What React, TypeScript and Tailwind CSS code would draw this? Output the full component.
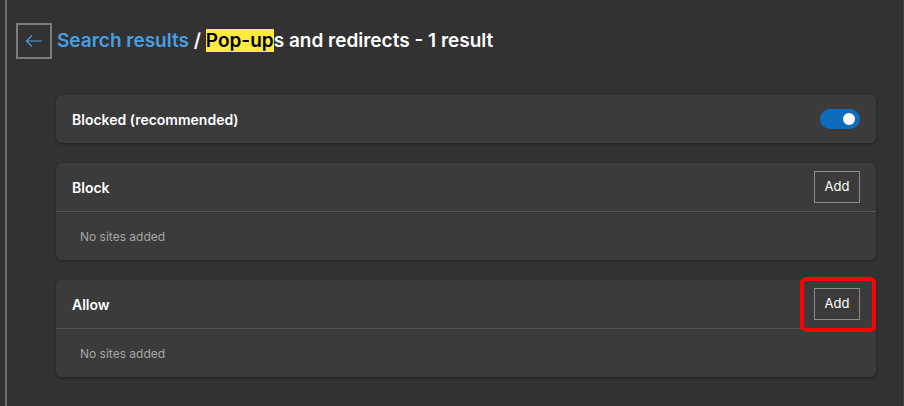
import { ReactNode } from "react";

function Card({ children }: { children: ReactNode }) {
  return (
    <div className="rounded-md bg-[#3b3b3b] shadow-[0_1px_3px_rgba(0,0,0,0.35)]">
      {children}
    </div>
  );
}

function AddButton({ highlight }: { highlight?: boolean }) {
  return (
    <div className="relative">
      <button className="h-[32px] w-[46px] border border-[#8c8c8c] bg-[#3b3b3b] text-[13px] text-white">
        Add
      </button>
      {highlight && (
        <span className="pointer-events-none absolute -left-[14px] -right-[16px] -top-[11px] -bottom-[12px] rounded-md border-4 border-[#ff0000]"></span>
      )}
    </div>
  );
}

function SiteList({ title, highlight }: { title: string; highlight?: boolean }) {
  return (
    <Card>
      <div className="flex h-[49px] items-center justify-between border-b border-[#555555] pl-4 pr-4">
        <span className="text-[14px] font-semibold text-white">{title}</span>
        <AddButton highlight={highlight} />
      </div>
      <div className="flex h-[48px] items-center pl-6 pt-[2px] text-[12px] text-[#a6a6a6]">
        No sites added
      </div>
    </Card>
  );
}

export default function App() {
  return (
    <div
      className="flex h-[406px] w-[904px] overflow-hidden bg-[#323232]"
      style={{ fontFamily: "Inter, 'Liberation Sans', sans-serif" }}
    >
      <div className="ml-[5px] w-[2px] bg-[#6e6e6e]"></div>
      <div className="flex-1">
        <div className="flex items-center gap-[5px] pl-[9px] pt-[23px]">
          <button className="flex h-[36px] w-[36px] items-center justify-center border-2 border-[#7c7c7c] text-[#4a9fe0]">
            <svg width="18" height="18" viewBox="0 0 18 18" fill="none" stroke="currentColor" strokeWidth="1.2">
              <path d="M17 9H1.5M7 3.5L1.5 9L7 14.5" />
            </svg>
          </button>
          <h1 className="text-[19px] font-semibold text-white">
            <span className="text-[#4a9fe0]">Search results</span> /{" "}
            <span className="bg-[#ffeb3b] text-black">Pop-up</span>s and redirects - 1 result
          </h1>
        </div>
        <div className="ml-[49px] mt-[36px] flex w-[820px] flex-col gap-5">
          <Card>
            <div className="flex h-[48px] items-center justify-between pl-4 pr-4">
              <span className="text-[14px] font-semibold text-white">Blocked (recommended)</span>
              <div className="flex h-[20px] w-[40px] items-center justify-end rounded-full bg-[#0f6cbd] pr-[5px]">
                <div className="h-[12px] w-[12px] rounded-full bg-white"></div>
              </div>
            </div>
          </Card>
          <SiteList title="Block" />
          <SiteList title="Allow" highlight />
        </div>
      </div>
      <div className="w-px bg-[#444444]"></div>
    </div>
  );
}
